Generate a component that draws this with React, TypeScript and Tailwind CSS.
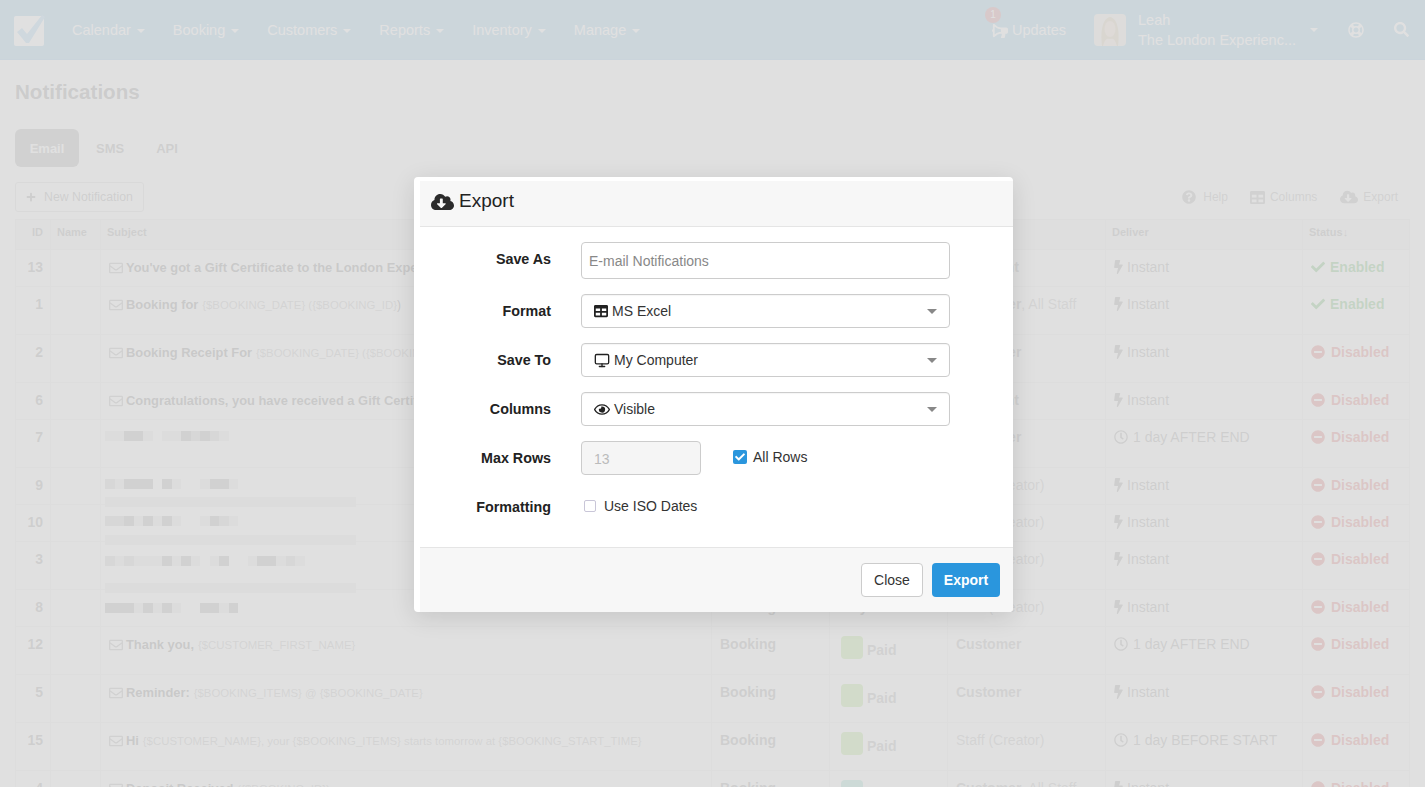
import React from "react";
import {
  FaBolt, FaBullhorn, FaCheck, FaCloudDownloadAlt, FaMinusCircle, FaPlus,
  FaQuestionCircle, FaRegClock, FaRegEnvelope, FaRegEye, FaRegLifeRing, FaSearch, FaTable,
} from "react-icons/fa";
import { Monitor } from "lucide-react";

const Caret = ({ className = "" }: { className?: string }) => (
  <span className={`inline-block w-0 h-0 border-x-[4px] border-x-transparent border-t-[4px] ${className}`} />
);

type Row = {
  h: string; id: string; subject?: React.ReactNode; pix?: string; pixTop?: string; stripe?: string;
  type?: string; paid?: "green" | "teal" | "any"; to?: React.ReactNode; deliver: string; on?: boolean;
};

const V = ({ children }: { children: React.ReactNode }) => <span className="text-[11.4px] font-normal text-[#aaa]">{children}</span>;
const B = ({ children }: { children: React.ReactNode }) => <b className="text-[12.9px] font-bold text-[#666]">{children}</b>;

const Cust = <b className="font-bold text-[#999]">Customer</b>;
const Staff = <span className="text-[#aaa]">Staff (Creator)</span>;

const rows: Row[] = [
  { h: "h-[37px]", id: "13", subject: <B>You've got a Gift Certificate to the London Experience</B>, type: "Booking", paid: "green", to: <b className="font-bold text-[#999]">Recipient</b>, deliver: "Instant", on: true },
  { h: "h-[48px]", id: "1", subject: <><B>Booking for</B> <V>{"{$BOOKING_DATE} ({$BOOKING_ID}"}</V><span className="text-[12px] text-[#666]">)</span></>, type: "Booking", paid: "green", to: <>{Cust}<span className="text-[#aaa]">, All Staff</span></>, deliver: "Instant", on: true },
  { h: "h-[48px]", id: "2", subject: <><B>Booking Receipt For</B> <V>{"{$BOOKING_DATE} ({$BOOKING_ID})"}</V></>, type: "Booking", paid: "green", to: Cust, deliver: "Instant" },
  { h: "h-[37px]", id: "6", subject: <B>Congratulations, you have received a Gift Certificate</B>, type: "Booking", paid: "green", to: <b className="font-bold text-[#999]">Recipient</b>, deliver: "Instant" },
  { h: "h-[48px]", id: "7", pix: "11331011323210", pixTop: "mt-[4px]", type: "Booking", paid: "green", to: Cust, deliver: "1 day AFTER END" },
  { h: "h-[37px]", id: "9", pix: "21333031001331", pixTop: "mt-[4px]", stripe: "-bottom-[3px]", type: "Booking", paid: "green", to: Staff, deliver: "Instant" },
  { h: "h-[37px]", id: "10", pix: "22313131001321", pixTop: "mt-[4px]", stripe: "-bottom-[4px]", type: "Booking", paid: "green", to: Staff, deliver: "Instant" },
  { h: "h-[48px]", id: "3", pix: "212111313101300133121", pixTop: "mt-[7px]", stripe: "-bottom-[4px]", type: "Booking", paid: "green", to: Staff, deliver: "Instant" },
  { h: "h-[37px]", id: "8", pix: "33313131003313", pixTop: "mt-[6px]", type: "Booking", paid: "any", to: Staff, deliver: "Instant" },
  { h: "h-[48px]", id: "12", subject: <><B>Thank you,</B> <V>{"{$CUSTOMER_FIRST_NAME}"}</V></>, type: "Booking", paid: "green", to: Cust, deliver: "1 day AFTER END" },
  { h: "h-[48px]", id: "5", subject: <><B>Reminder:</B> <V>{"{$BOOKING_ITEMS} @ {$BOOKING_DATE}"}</V></>, type: "Booking", paid: "green", to: Cust, deliver: "Instant" },
  { h: "h-[48px]", id: "15", subject: <><B>Hi</B> <V>{"{$CUSTOMER_NAME}, your {$BOOKING_ITEMS} starts tomorrow at {$BOOKING_START_TIME}"}</V></>, type: "Booking", paid: "green", to: Staff, deliver: "1 day BEFORE START" },
  { h: "h-[48px]", id: "4", subject: <><B>Deposit Received</B> <V>{"({$BOOKING_ID})"}</V></>, type: "Booking", paid: "teal", to: <>{Cust}<span className="text-[#aaa]">, All Staff</span></>, deliver: "Instant" },
];

const pixClass: Record<string, string> = {
  "0": "bg-transparent",
  "1": "bg-[#e4e4e4]",
  "2": "bg-[#c4c4c4]",
  "3": "bg-[#989898]",
};

const Pixels = ({ code, top }: { code: string; top?: string }) => (
  <div className={`flex -ml-[4px] ${top ?? ""}`}>
    {code.split("").map((c, i) => (
      <span key={i} className={`block w-[9.5px] h-[10px] ${pixClass[c]}`} />
    ))}
  </div>
);

const Select = ({ icon, label }: { icon: React.ReactNode; label: string }) => (
  <div className="w-[369px] h-[34px] border border-[#ccc] rounded-[4px] bg-white flex items-center pl-[12px] pr-[12px] text-[14px] text-[#333] shadow-[inset_0_1px_1px_rgba(0,0,0,0.04)]">
    <span className="flex items-center justify-center mr-[4px]">{icon}</span>
    <span>{label}</span>
    <Caret className="ml-auto border-x-[5px] border-t-[5px] border-t-[#888]" />
  </div>
);

const Field = ({ label, children, h, lift }: { label: string; children: React.ReactNode; h: string; lift?: boolean }) => (
  <div className={`flex items-center ${h}`}>
    <label className={`w-[131px] text-right text-[14.3px] font-bold text-[#222] shrink-0 ${lift ? "mb-[2px]" : "mt-[2px]"}`}>{label}</label>
    <div className="ml-[30px] flex items-center">{children}</div>
  </div>
);

export default function App() {
  return (
    <div className="relative h-[787px] w-[1425px] overflow-hidden bg-white font-['Liberation_Sans',Arial,sans-serif] text-[14px] text-[#333]">
      {/* Nav */}
      <header className="h-[60px] bg-[#79b8de] flex items-center text-white text-[14.5px] border-b border-[#6fb0da]">
        <svg width="31" height="31" viewBox="0 0 31 31" className="ml-[14px] mr-[27px] shrink-0 mt-[1px]">
          <rect x="0" y="1" width="30" height="30" rx="2" fill="#fff" />
          <path d="M3 17 L8 13 L13 19 L28 0 L31 2 L15 28 L12 28 Z" fill="#8fc8ee" />
        </svg>
        <nav className="flex gap-[28px] mt-[2px]">
          {["Calendar", "Booking", "Customers", "Reports", "Inventory", "Manage"].map((t) => (
            <span key={t} className="flex items-center gap-[6px]">
              {t}
              <Caret className="border-t-white" />
            </span>
          ))}
        </nav>
        <div className="ml-auto flex items-center">
          <span className="relative flex items-center gap-[4px] mr-[28px] mt-[2px]">
            <FaBullhorn className="w-[16px] h-[16px] -scale-x-100 mt-[1px]" />
            Updates
            <span className="absolute -left-[7px] -top-[13px] w-[16px] h-[16px] rounded-full bg-[#c9656b] text-[10px] flex items-center justify-center">1</span>
          </span>
          <svg width="32" height="32" viewBox="0 0 32 32" className="rounded-[4px] shrink-0">
            <rect width="32" height="32" fill="#e8e4de" />
            <path d="M8 32 C6 16 9 4 16 3 C23 4 26 16 24 32 Z" fill="#cdbb95" />
            <ellipse cx="16" cy="15" rx="5.5" ry="8" fill="#f0d4c2" />
            <path d="M9 32 C11 25 13 24 16 25 C19 24 21 25 23 32 Z" fill="#f2dccd" />
          </svg>
          <div className="ml-[12px] w-[172px] leading-[20px] mt-[1px]">
            <div>Leah</div>
            <div className="truncate">The London Experienc...</div>
          </div>
          <Caret className="border-t-white" />
          <FaRegLifeRing className="w-[16px] h-[16px] ml-[30px]" />
          <FaSearch className="w-[15px] h-[15px] ml-[30px] mr-[16px]" />
        </div>
      </header>

      {/* Page */}
      <main className="px-[15px]">
        <h1 className="mt-[19px] h-[25px] leading-[25px] text-[20.6px] font-bold text-[#777]">Notifications</h1>
        <div className="mt-[25px] flex items-center text-[13px] font-bold h-[38px]">
          <span className="w-[64px] h-[38px] pt-[2px] rounded-[6px] bg-[#999] text-white flex items-center justify-center">Email</span>
          <span className="ml-[17px] pt-[2px] text-[#888]">SMS</span>
          <span className="ml-[32px] pt-[2px] text-[#888]">API</span>
        </div>
        <div className="mt-[15px] flex items-center h-[30px] text-[12px] text-[#999]">
          <span className="w-[129px] h-[30px] border border-[#ccc] rounded-[3px] flex items-center pl-[10px] gap-[8px] text-[#888] text-[12.3px]">
            <FaPlus className="w-[10px] h-[10px]" /> New Notification
          </span>
          <span className="ml-auto flex items-center gap-[7px]"><FaQuestionCircle className="w-[14px] h-[14px]" />Help</span>
          <span className="ml-[22px] flex items-center gap-[5px]"><FaTable className="w-[15px] h-[15px]" />Columns</span>
          <span className="ml-[23px] mr-[12px] flex items-center gap-[5px]"><FaCloudDownloadAlt className="w-[18px] h-[18px]" />Export</span>
        </div>
        <table className="mt-[7px] w-[1394px] table-fixed border-collapse">
          <colgroup>
            <col className="w-[35px]" /><col className="w-[50px]" /><col className="w-[611px]" /><col className="w-[118px]" />
            <col className="w-[118px]" /><col className="w-[158px]" /><col className="w-[197px]" /><col className="w-[107px]" />
          </colgroup>
          <thead>
            <tr className="h-[30px] bg-[#f0f0f0] text-[11px] font-bold text-[#888]">
              <th className="border border-[#e0e0e0] align-top pt-[5px] leading-[14px] text-right pr-[7px] font-bold">ID</th>
              <th className="border border-[#e0e0e0] align-top pt-[5px] leading-[14px] px-[6px] text-left font-bold">Name</th>
              <th className="border border-[#e0e0e0] align-top pt-[5px] leading-[14px] px-[6px] text-left font-bold">Subject</th>
              <th className="border border-[#e0e0e0] align-top pt-[5px] leading-[14px] px-[6px] text-left font-bold">Type</th>
              <th className="border border-[#e0e0e0] align-top pt-[5px] leading-[14px] px-[6px] text-left font-bold">Status</th>
              <th className="border border-[#e0e0e0] align-top pt-[5px] leading-[14px] px-[6px] text-left font-bold">Recipient</th>
              <th className="border border-[#e0e0e0] align-top pt-[5px] leading-[14px] px-[6px] text-left font-bold">Deliver</th>
              <th className="border border-[#e0e0e0] align-top pt-[5px] leading-[14px] px-[6px] text-left font-bold">Status<span className="text-[#888]">↓</span></th>
            </tr>
          </thead>
          <tbody>
            {rows.map((r) => (
              <tr key={r.id} className={r.h}>
                <td className="border border-[#e6e6e6] align-top pt-[7px] pr-[7px] text-right leading-[20px] font-bold text-[#888]">{r.id}</td>
                <td className="border border-[#e6e6e6]" />
                <td className="relative border border-[#e6e6e6] align-top pt-[7px] pl-[8px] leading-[20px] whitespace-nowrap overflow-visible">
                  {r.pix ? (
                    <Pixels code={r.pix} top={r.pixTop} />
                  ) : (
                    <span className="flex items-center gap-[3px]">
                      <FaRegEnvelope className="w-[14px] h-[14px] text-[#999] shrink-0" />
                      <span>{r.subject}</span>
                    </span>
                  )}
                  {r.stripe && <span className={`absolute left-[4px] w-[251px] h-[10px] bg-[#e2e2e2] ${r.stripe}`} />}
                </td>
                <td className="border border-[#e6e6e6] align-top pt-[7px] pl-[8px] leading-[20px] font-bold text-[#888]">{r.type}</td>
                <td className="border border-[#e6e6e6] align-top pl-[11px] pt-[9px]">
                  {r.paid === "any" ? (
                    <span className="block -mt-[2px] leading-[20px] font-bold text-[#888]">Any</span>
                  ) : (
                    <span className="flex items-end gap-[4px] leading-[18px]">
                      <span className={`w-[22px] h-[23px] rounded-[4px] ${r.paid === "teal" ? "bg-[#7fd6c0]" : "bg-[#9fdc6a]"}`} />
                      {r.paid === "green" && <span className="font-bold text-[#999]">Paid</span>}
                    </span>
                  )}
                </td>
                <td className="border border-[#e6e6e6] align-top pt-[7px] pl-[8px] leading-[20px] whitespace-nowrap">{r.to}</td>
                <td className="border border-[#e6e6e6] align-top pt-[7px] pl-[8px] leading-[20px] text-[#888] whitespace-nowrap">
                  <span className="flex items-center gap-[4px]">
                    {r.deliver === "Instant" ? <FaBolt className="w-[9px] h-[14px]" /> : <FaRegClock className="w-[14px] h-[14px] mr-[1px]" />}
                    {r.deliver}
                  </span>
                </td>
                <td className="border border-[#e6e6e6] align-top pt-[7px] pl-[8px] leading-[20px] font-bold whitespace-nowrap">
                  {r.on ? (
                    <span className="flex items-center gap-[5px] text-[#45a845]"><FaCheck className="w-[14px] h-[14px]" />Enabled</span>
                  ) : (
                    <span className="flex items-center gap-[6px] text-[#d9534f]"><FaMinusCircle className="w-[14px] h-[14px]" />Disabled</span>
                  )}
                </td>
              </tr>
            ))}
          </tbody>
        </table>
      </main>

      {/* Backdrop */}
      <div className="absolute inset-0 bg-[#dadada]/85" />

      {/* Modal */}
      <div className="absolute inset-0 flex justify-center items-start pt-[177px] pl-[2px]">
        <div className="w-[599px] h-[435px] bg-white rounded-[4px] shadow-[0_5px_25px_rgba(0,0,0,0.12)] flex flex-col pt-[4px] pl-[6px] overflow-hidden">
          <div className="h-[46px] pb-[4px] bg-[#f7f7f7] border-b border-[#e5e5e5] flex items-center pl-[11px] text-[19px] text-[#222] shrink-0">
            <FaCloudDownloadAlt className="w-[23px] h-[20px] mr-[5px] text-[#2b2b2b]" />
            Export
          </div>
          <div className="flex-1 pt-[15px] flex flex-col gap-[15px]">
            <Field label="Save As" h="h-[37px]" lift>
              <input
                readOnly
                placeholder="E-mail Notifications"
                className="w-[369px] h-[37px] border border-[#ccc] rounded-[4px] px-[7px] text-[14px] outline-none placeholder:text-[#888]"
              />
            </Field>
            <Field label="Format" h="h-[34px]">
              <Select icon={<FaTable className="w-[14px] h-[14px] text-[#222]" />} label="MS Excel" />
            </Field>
            <Field label="Save To" h="h-[34px]">
              <Select icon={<Monitor className="w-[16px] h-[17px] text-[#222]" strokeWidth={2} />} label="My Computer" />
            </Field>
            <Field label="Columns" h="h-[34px]">
              <Select icon={<FaRegEye className="w-[16px] h-[15px] text-[#222]" />} label="Visible" />
            </Field>
            <Field label="Max Rows" h="h-[34px]">
              <input
                disabled
                value="13"
                className="w-[120px] h-[34px] border border-[#ccc] rounded-[4px] px-[12px] pt-[2px] text-[14px] bg-[#f5f5f5] text-[#bbb]"
              />
              <span className="ml-[32px] mb-[2px] w-[14px] h-[14px] rounded-[2px] bg-[#2a96dd] flex items-center justify-center">
                <FaCheck className="w-[10px] h-[10px] text-white" />
              </span>
              <span className="ml-[6px] mb-[2px] text-[#333]">All Rows</span>
            </Field>
            <Field label="Formatting" h="h-[34px]">
              <span className="ml-[3px] mb-[2px] w-[12px] h-[12px] rounded-[2px] border border-[#c9c6d8] bg-white" />
              <span className="ml-[8px] mb-[2px] text-[#333]">Use ISO Dates</span>
            </Field>
          </div>
          <div className="h-[65px] bg-[#f7f7f7] border-t border-[#e5e5e5] flex items-center justify-end gap-[9px] pr-[13px] shrink-0">
            <button className="w-[62px] h-[34px] bg-white border border-[#ccc] rounded-[4px] text-[14px] text-[#333]">Close</button>
            <button className="w-[68px] h-[34px] bg-[#2a96dd] rounded-[4px] text-[14px] font-bold text-white">Export</button>
          </div>
        </div>
      </div>
    </div>
  );
}
